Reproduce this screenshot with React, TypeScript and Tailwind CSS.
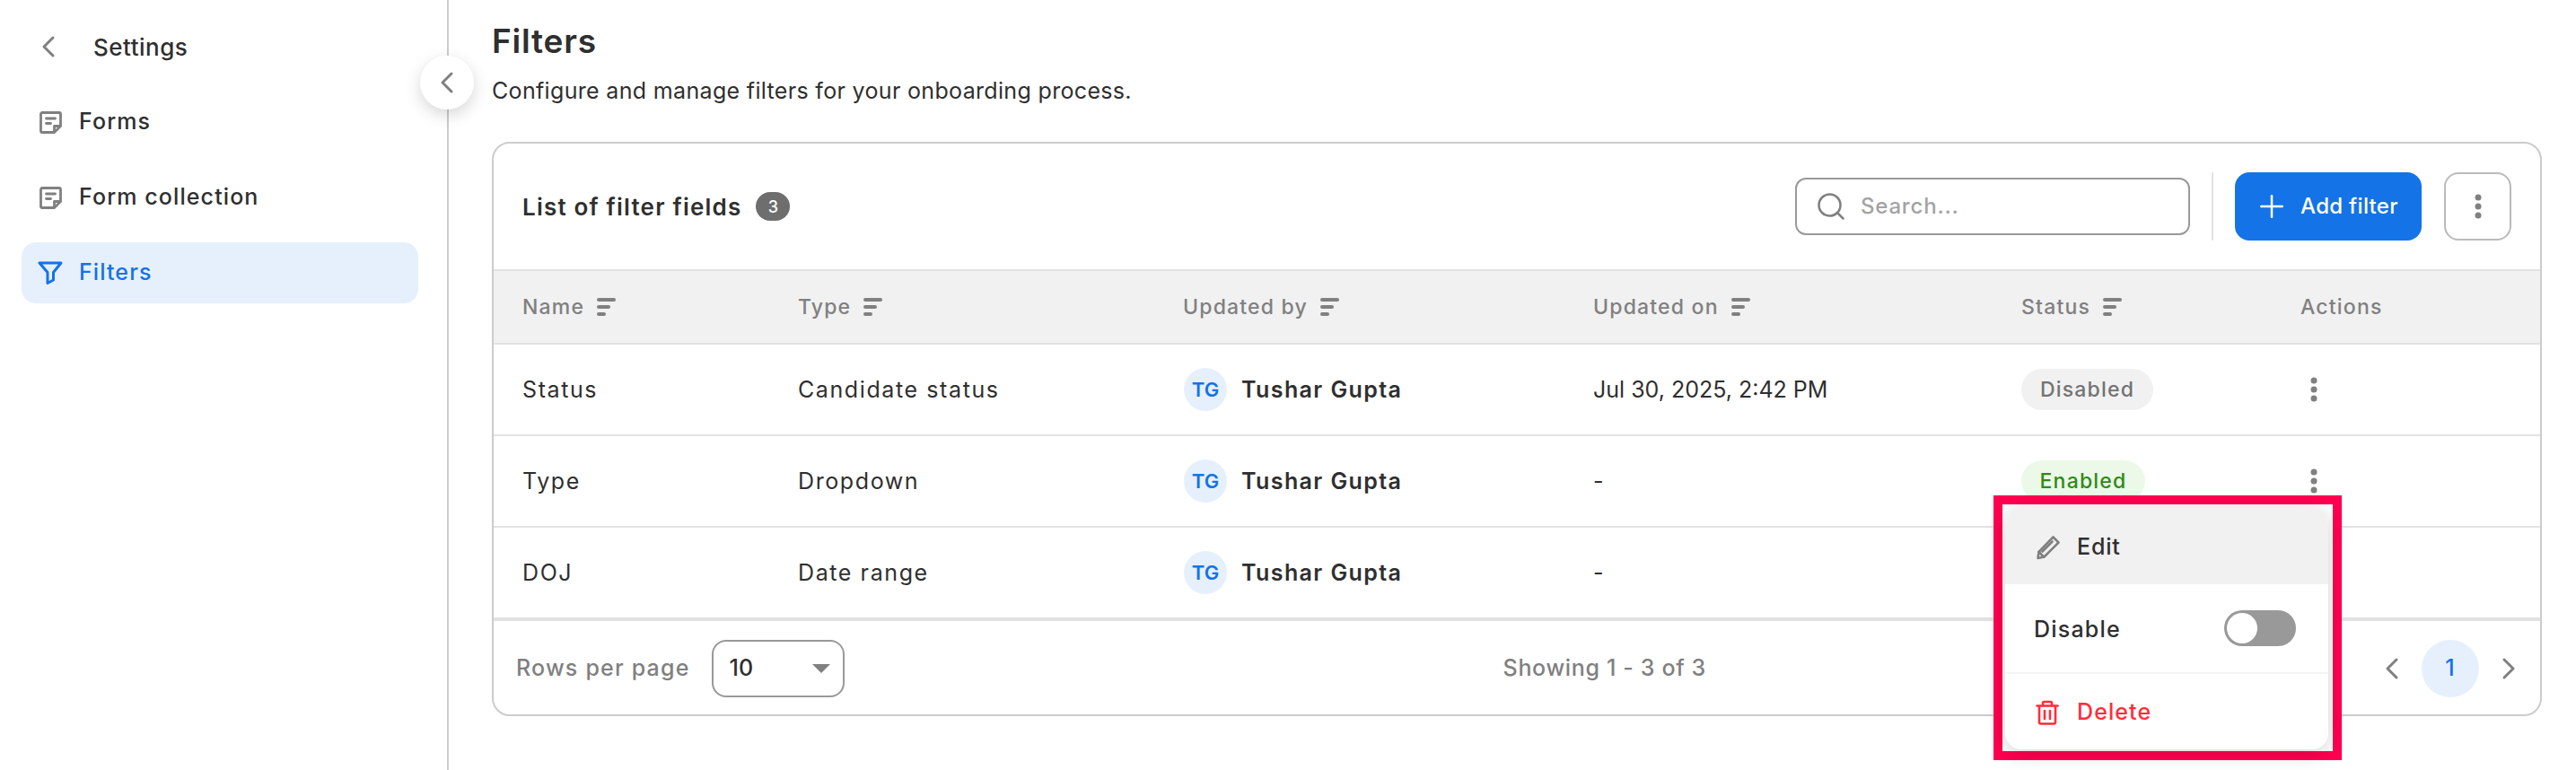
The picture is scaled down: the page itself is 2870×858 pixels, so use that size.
import { ChevronLeft, ChevronRight, Plus, Search } from "lucide-react";

const columns = "grid grid-cols-[307px_429px_457px_477px_311px_1fr] items-center";

const rows = [
    { name: "Status", type: "Candidate status", updatedOn: "Jul 30, 2025, 2:42 PM", status: "Disabled" },
    { name: "Type", type: "Dropdown", updatedOn: "-", status: "Enabled" },
    { name: "DOJ", type: "Date range", updatedOn: "-", status: "" },
];

function NoteIcon() {
    return (
        <svg width="25" height="25" viewBox="0 0 25 25" fill="none" stroke="#808080" strokeWidth="2.800" strokeLinejoin="round" strokeLinecap="round">
            <path d="M3 1.500h19a1.500 1.500 0 0 1 1.500 1.500v13.500L16.500 23.500H3A1.500 1.500 0 0 1 1.500 22V3A1.500 1.500 0 0 1 3 1.500Z" />
            <path d="M23 16.500h-6.500V23" />
            <path d="M7.500 8h10M7.500 13.500h5" />
        </svg>
    );
}

function FilterIcon() {
    return (
        <svg width="28" height="26" viewBox="0 0 28 26" fill="none" stroke="#1473e6" strokeWidth="3" strokeLinejoin="round" strokeLinecap="round">
            <path d="M2 2h24L17.500 12.500V21l-6.500 3.500V12.500Z" />
        </svg>
    );
}

function SortIcon() {
    return (
        <svg width="21" height="20" viewBox="0 0 21 20" fill="#808080">
            <rect x="0" y="0" width="21" height="4" rx="2" />
            <rect x="0" y="8" width="15" height="4" rx="2" />
            <rect x="0" y="16" width="10" height="4" rx="2" />
        </svg>
    );
}

function Kebab() {
    return (
        <svg width="8" height="28" viewBox="0 0 8 28" fill="#808080">
            <circle cx="4" cy="4" r="3.500" />
            <circle cx="4" cy="14" r="3.500" />
            <circle cx="4" cy="24" r="3.500" />
        </svg>
    );
}

function PencilIcon() {
    return (
        <svg width="28" height="28" viewBox="0 0 28 28" fill="none" stroke="#808080" strokeWidth="2.600" strokeLinejoin="round" strokeLinecap="round">
            <path d="M19.500 2.500l6 6L9.500 24.500l-7 1.500 1-7Z" />
            <path d="M7.500 18.500l11-11M3.500 19l5.500 5.500" />
        </svg>
    );
}

function TrashIcon() {
    return (
        <svg width="26" height="28" viewBox="0 0 26 28" fill="none" stroke="currentColor" strokeWidth="2.600" strokeLinejoin="round" strokeLinecap="round">
            <path d="M1.500 6.500h23" />
            <path d="M8 6V3.500A1.500 1.500 0 0 1 9.500 2h7A1.500 1.500 0 0 1 18 3.500V6" />
            <path d="M4 7v17.500A2 2 0 0 0 6 26.500h14a2 2 0 0 0 2-2V7" />
            <path d="M10 12v9M16 12v9" />
        </svg>
    );
}

function NavItem({ label }: { label: string }) {
    return (
        <div className="flex h-[68px] items-center gap-[19px] pl-[20px]">
            <NoteIcon />
            <span className="text-[25px] font-medium tracking-[1.100px]">{label}</span>
        </div>
    );
}

function StatusBadge({ status }: { status: string }) {
    if (status === "Disabled") {
        return <span className="inline-flex h-[46px] w-[147px] items-center justify-center rounded-full bg-[#f1f1f1] text-[23px] font-medium tracking-[1.200px] text-[#737373]">Disabled</span>;
    }
    if (status === "Enabled") {
        return <span className="inline-flex h-[46px] w-[138px] items-center justify-center rounded-full bg-[#ecf9e8] text-[23px] font-medium tracking-[1.200px] text-[#2f8a17]">Enabled</span>;
    }
    return null;
}

function RowMenu() {
    return (
        <div className="absolute left-[1721px] top-[552px] z-10 border-[10px] border-[#ff0050] bg-white">
            <div className="mb-[2px] ml-[3px] mr-[5px] mt-[4px] w-[360px] overflow-hidden rounded-[18px] bg-white shadow-[0_4px_24px_rgba(0,0,0,0.18)]">
                <div className="flex h-[85px] items-center gap-[18px] bg-[#f1f1f1] pl-[34px] pt-[2px]">
                    <PencilIcon />
                    <span className="text-[25px] font-medium tracking-[0.8px]">Edit</span>
                </div>
                <div className="flex h-[100px] items-center justify-between border-b-2 border-[#f5f5f5] pl-[32px] pr-[36px]">
                    <span className="pt-[3px] text-[25px] font-medium tracking-[1.200px]">Disable</span>
                    <div className="flex h-[40px] w-[80px] items-center rounded-full bg-[#999999] pl-[3px]">
                        <div className="size-[34px] rounded-full bg-white" />
                    </div>
                </div>
                <div className="flex h-[84px] items-center gap-[20px] pl-[34px] pt-[2px] text-[#ff2d3d]">
                    <TrashIcon />
                    <span className="text-[25px] font-medium tracking-[1.100px]">Delete</span>
                </div>
            </div>
        </div>
    );
}

export default function App() {
    return (
        <div className="flex h-[858px] w-[2870px] overflow-hidden bg-white font-['Inter',sans-serif] text-[#2f2f2f]">
            <aside className="relative w-[500px] shrink-0 border-r-2 border-[#cccccc] pl-[24px] pr-[32px]">
                <div className="flex h-[102px] items-center gap-[30px] pl-[10px] pt-[2px]">
                    <ChevronLeft size={40} color="#808080" strokeWidth={1.800} />
                    <span className="text-[26px] font-medium tracking-[0.5px]">Settings</span>
                </div>
                <nav className="flex flex-col gap-[16px]">
                    <NavItem label="Forms" />
                    <NavItem label="Form collection" />
                    <div className="flex h-[68px] items-center gap-[18px] rounded-[16px] bg-[#e6f0fc] pl-[18px] text-[#1473e6]">
                        <FilterIcon />
                        <span className="text-[25px] font-medium tracking-[1.100px]">Filters</span>
                    </div>
                </nav>
                <button className="absolute left-[468px] top-[62px] z-10 flex size-[60px] items-center justify-center rounded-full bg-white shadow-[0_6px_18px_rgba(0,0,0,0.16)]">
                    <ChevronLeft size={40} color="#808080" strokeWidth={1.800} />
                </button>
            </aside>

            <main className="relative flex-1 pl-[48px] pr-[38px]">
                <h1 className="flex h-[78px] items-center pt-[13px] text-[37px] font-semibold leading-none tracking-[0.8px]">Filters</h1>
                <p className="flex h-[48px] items-center text-[25px] tracking-[0.33px]">Configure and manage filters for your onboarding process.</p>
                <div className="mt-[32px] h-[640px] rounded-[20px] border-2 border-[#cccccc]">
                    <div className="flex h-[140px] items-center justify-between pl-[32px] pr-[32px]">
                        <div className="flex items-center gap-[16px]">
                            <span className="text-[26px] font-semibold tracking-[1.200px]">List of filter fields</span>
                            <span className="flex h-[32px] w-[38px] items-center justify-center rounded-full bg-[#6e6e6e] text-[18px] font-medium text-white">3</span>
                        </div>
                        <div className="flex items-center">
                            <div className="flex h-[64px] w-[440px] items-center gap-[15px] rounded-[12px] border-2 border-[#999999] pl-[20px]">
                                <Search size={36} color="#808080" strokeWidth={1.700} />
                                <input placeholder="Search..." className="w-[340px] text-[24px] font-medium tracking-[0.8px] outline-none placeholder:text-[#a3a3a3]" />
                            </div>
                            <div className="mx-[24px] h-[76px] w-[2px] bg-[#e2e2e2]" />
                            <button className="flex h-[76px] w-[208px] items-center gap-[12px] rounded-[16px] bg-[#1473e6] pl-[21px] text-[24px] font-medium tracking-[0.3px] text-white">
                                <Plus size={40} strokeWidth={1.500} />
                                Add filter
                            </button>
                            <button className="ml-[25px] flex h-[76px] w-[75px] items-center justify-center rounded-[16px] border-2 border-[#bbbbbb]">
                                <Kebab />
                            </button>
                        </div>
                    </div>

                    <div className={`${columns} h-[84px] border-y-2 border-[#e2e2e2] bg-[#f1f1f1] text-[23px] font-medium tracking-[1.2px] text-[#808080]`}>
                        {["Name", "Type", "Updated by", "Updated on", "Status"].map((label) => (
                            <div key={label} className="flex items-center gap-[14px] pl-[32px]">
                                {label}
                                <SortIcon />
                            </div>
                        ))}
                        <div className="pl-[32px]">Actions</div>
                    </div>

                    {rows.map((row) => (
                        <div key={row.name} className={`${columns} h-[102px] border-b-2 border-[#e2e2e2] text-[25px] tracking-[1.600px]`}>
                            <div className="pl-[32px] pt-[2px]">{row.name}</div>
                            <div className="pl-[32px] pt-[2px]">{row.type}</div>
                            <div className="flex items-center gap-[16px] pl-[33px]">
                                <span className="flex size-[48px] items-center justify-center rounded-full bg-[#e6f0fc] text-[22px] font-semibold tracking-normal text-[#1473e6]">TG</span>
                                <span className="pt-[2px] font-semibold tracking-[1.400px]">Tushar Gupta</span>
                            </div>
                            <div className="pl-[32px] pt-[2px] tracking-normal">{row.updatedOn}</div>
                            <div className="pl-[32px]">
                                <StatusBadge status={row.status} />
                            </div>
                            <div className="flex pl-[43px]">
                                <Kebab />
                            </div>
                        </div>
                    ))}

                    <div className="flex h-[106px] items-center justify-between border-t-2 border-[#e2e2e2] pl-[25px] pr-[15px] pt-[2px] text-[25px] font-medium tracking-[1.2px] text-[#808080]">
                        <div className="flex items-center gap-[24px]">
                            <span>Rows per page</span>
                            <div className="flex h-[64px] w-[148px] items-center justify-between rounded-[16px] border-2 border-[#999999] pl-[18px] pr-[14px] tracking-normal text-[#2f2f2f]">
                                10
                                <span className="h-0 w-0 border-x-[10px] border-t-[10px] border-x-transparent border-t-[#808080]" />
                            </div>
                        </div>
                        <span className="mr-[10px] tracking-[0.650px]">Showing 1 - 3 of 3</span>
                        <div className="flex items-center gap-[13px]">
                            <ChevronLeft size={40} color="#808080" strokeWidth={1.800} />
                            <span className="flex size-[64px] items-center justify-center rounded-full bg-[#e6f0fc] text-[#1473e6]">1</span>
                            <ChevronRight size={40} color="#808080" strokeWidth={1.800} />
                        </div>
                    </div>
                </div>
                <RowMenu />
            </main>
        </div>
    );
}
